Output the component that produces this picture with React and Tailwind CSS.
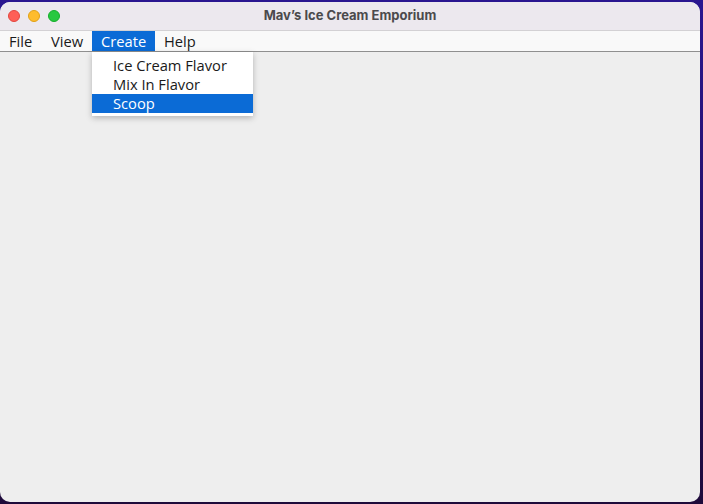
export default function App() {
  const font = { fontFamily: '"Open Sans", "DejaVu Sans", sans-serif' };
  return (
    <div className="w-[703px] h-[504px] overflow-hidden bg-[linear-gradient(180deg,#2a1690_0%,#24105f_60%,#1e0a3a_100%)] pt-[2px]">
      <div className="relative w-[700px] h-[500px] rounded-[10px] bg-[#eeeeee] overflow-hidden">
        {/* Title bar */}
        <div className="h-[29px] bg-[#ece8ee] border-b border-[#d3d1d4] flex items-center relative">
          <div className="flex items-center gap-[8px] pl-[8px]">
            <span className="w-[12px] h-[12px] rounded-full bg-[#fe5f57] border border-[#e2463f]" />
            <span className="w-[12px] h-[12px] rounded-full bg-[#febc2e] border border-[#e1a116]" />
            <span className="w-[12px] h-[12px] rounded-full bg-[#28c840] border border-[#14ae2a]" />
          </div>
          <div className="absolute inset-0 flex items-center justify-center text-[13px] font-bold text-[#4b4a4c]" style={{ fontFamily: '"Inter", "Liberation Sans", sans-serif' }}>
            Mav’s Ice Cream Emporium
          </div>
        </div>
        {/* Menu bar */}
        <div className="h-[21px] bg-[#f9f9f9] border-b border-[#8f8f8f] flex items-stretch text-[14.7px] leading-none text-[#1a1a1a]" style={font}>
          <div className="w-[42px] pl-[9px] flex items-center">File</div>
          <div className="w-[50px] pl-[9px] flex items-center">View</div>
          <div className="w-[63px] pl-[9px] flex items-center bg-[#0b6bd6] text-white">Create</div>
          <div className="pl-[9px] flex items-center">Help</div>
        </div>
        {/* Dropdown */}
        <div className="absolute left-[92px] top-[50px] w-[161px] bg-white pt-[4px] pb-[3px] shadow-[0_2px_6px_rgba(0,0,0,0.25)] text-[14.7px] leading-none text-[#1a1a1a]" style={font}>
          <div className="h-[19px] pl-[21px] flex items-center">Ice Cream Flavor</div>
          <div className="h-[19px] pl-[21px] flex items-center">Mix In Flavor</div>
          <div className="h-[19px] pl-[21px] flex items-center bg-[#0b6bd6] text-white">Scoop</div>
        </div>
      </div>
    </div>
  );
}
